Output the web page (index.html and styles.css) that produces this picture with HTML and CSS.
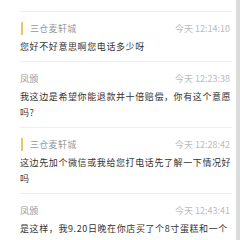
FILE: index.html
```html
<!DOCTYPE html>
<html lang="zh-CN">
<head>
    <meta charset="UTF-8">
    <meta name="viewport" content="width=device-width, initial-scale=1.0">
    <title>留言</title>
    <link rel="stylesheet" href="styles.css">
</head>
<body>
    <div class="page">
        <div class="list">
            <div class="item">
                <div class="head">
                    <span class="name shop">三仓麦轩城</span>
                    <span class="time">今天 12:14:10</span>
                </div>
                <p class="msg">您好不好意思啊您电话多少呀</p>
            </div>

            <div class="item">
                <div class="head">
                    <span class="name">凤颁</span>
                    <span class="time">今天 12:23:38</span>
                </div>
                <p class="msg">我这边是希望你能退款并十倍赔偿，你有这个意愿吗?</p>
            </div>

            <div class="item">
                <div class="head">
                    <span class="name shop">三仓麦轩城</span>
                    <span class="time">今天 12:28:42</span>
                </div>
                <p class="msg">这边先加个微信或我给您打电话先了解一下情况好吗</p>
            </div>

            <div class="item">
                <div class="head">
                    <span class="name">凤颁</span>
                    <span class="time">今天 12:43:41</span>
                </div>
                <p class="msg">是这样，我9.20日晚在你店买了个8寸蛋糕和一个</p>
            </div>
        </div>
        <div class="scrollbar"></div>
    </div>
</body>
</html>
```

FILE: styles.css
```css
body {
    font-family: "Noto Sans CJK SC", "Noto Sans", sans-serif;
    background-color: #fff;
    margin: 0;
    padding: 0;
}

.page {
    display: flex;
    height: 240px;
    overflow: hidden;
}

.list {
    flex: 1;
    padding-top: 11px;
    margin-left: 20px;
    margin-right: 4px;
}

.scrollbar {
    width: 4px;
    background-color: #dcdcdc;
}

.item {
    border-top: 1px solid #eee;
    padding: 9px 0 6px;
}

.head {
    display: flex;
    justify-content: space-between;
    align-items: center;
    height: 14px;
    padding-right: 2px;
}

.name {
    font-size: 9px;
    letter-spacing: 0.3px;
    color: #999;
}

.name.shop {
    border-left: 2px solid #e8c56a;
    padding-left: 7px;
    margin-left: 1px;
}

.time {
    font-size: 9px;
    color: #bbb;
}

.msg {
    margin: 4px 0 0;
    font-size: 9px;
    letter-spacing: 0.6px;
    line-height: 16px;
    color: #333;
}
```
